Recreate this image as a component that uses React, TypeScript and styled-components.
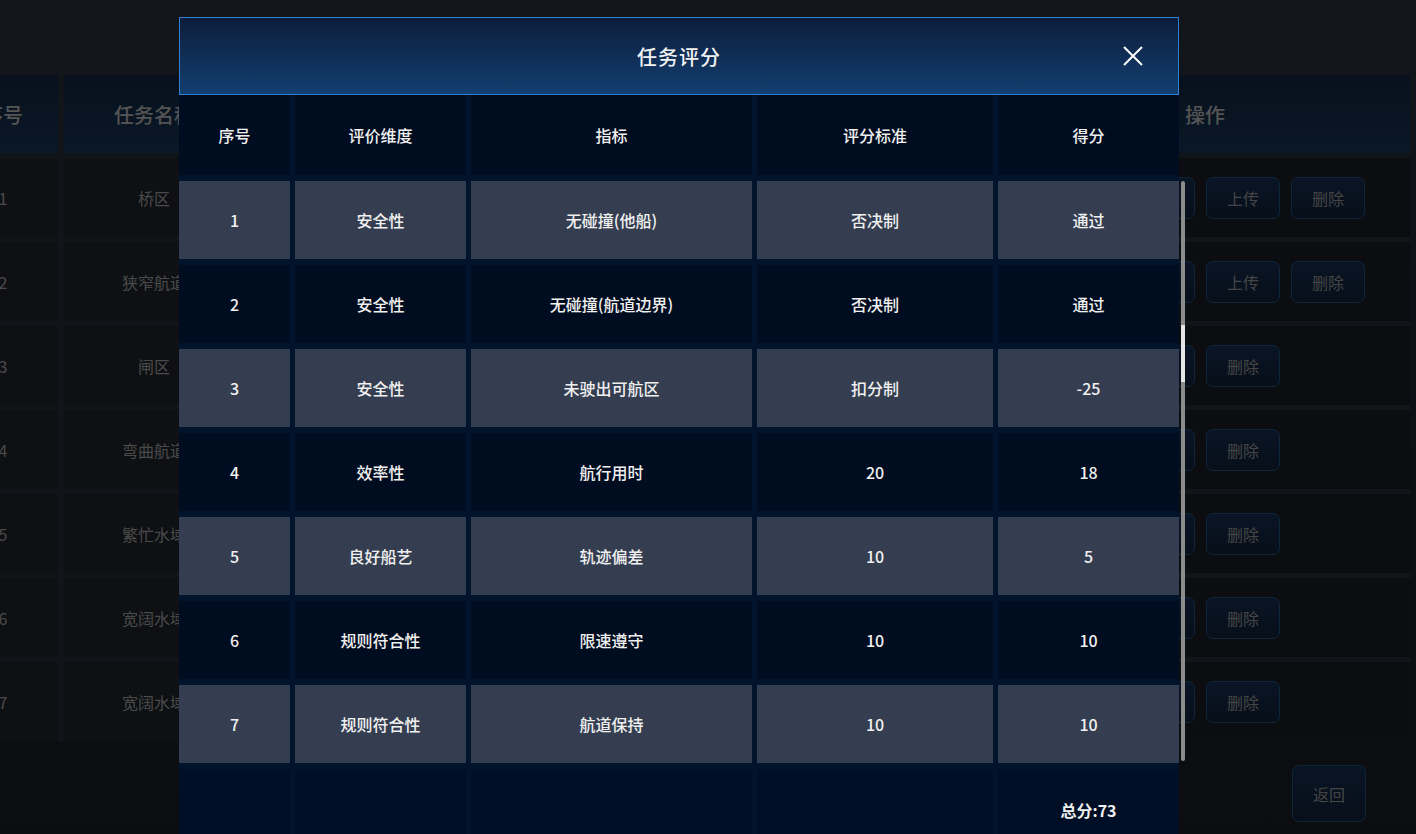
import { FC } from 'react'
import styled, { createGlobalStyle } from 'styled-components'

const GlobalStyle = createGlobalStyle`
  html, body {
    margin: 0;
    padding: 0;
    width: 1416px;
    height: 834px;
    overflow: hidden;
    background: #0f1318;
    font-family: 'Noto Sans CJK SC', 'Noto Sans', sans-serif;
  }
`

interface ScoreRow {
  no: number
  dimension: string
  indicator: string
  standard: string
  score: string
}

const scoreRows: ScoreRow[] = [
  { no: 1, dimension: '安全性', indicator: '无碰撞(他船)', standard: '否决制', score: '通过' },
  { no: 2, dimension: '安全性', indicator: '无碰撞(航道边界)', standard: '否决制', score: '通过' },
  { no: 3, dimension: '安全性', indicator: '未驶出可航区', standard: '扣分制', score: '-25' },
  { no: 4, dimension: '效率性', indicator: '航行用时', standard: '20', score: '18' },
  { no: 5, dimension: '良好船艺', indicator: '轨迹偏差', standard: '10', score: '5' },
  { no: 6, dimension: '规则符合性', indicator: '限速遵守', standard: '10', score: '10' },
  { no: 7, dimension: '规则符合性', indicator: '航道保持', standard: '10', score: '10' },
]

// 背景的任务列表
const tasks = [
  { no: 1, name: '桥区', ops: ['查看', '评分', '上传', '删除'] },
  { no: 2, name: '狭窄航道', ops: ['查看', '评分', '上传', '删除'] },
  { no: 3, name: '闸区', ops: ['查看', '评分', '删除'] },
  { no: 4, name: '弯曲航道', ops: ['查看', '评分', '删除'] },
  { no: 5, name: '繁忙水域', ops: ['查看', '评分', '删除'] },
  { no: 6, name: '宽阔水域', ops: ['查看', '评分', '删除'] },
  { no: 7, name: '宽阔水域', ops: ['查看', '评分', '删除'] },
]

const Background: FC = () => (
  <BgPage>
    <BgTable>
      <BgHead>序号</BgHead>
      <BgHead>任务名称</BgHead>
      <BgHead />
      <BgHead />
      <BgHead />
      <BgHead>操作</BgHead>
      {tasks.map((t) => (
        <BgRow key={t.no}>
          <BgCell>{t.no}</BgCell>
          <BgCell>{t.name}</BgCell>
          <BgCell />
          <BgCell />
          <BgCell />
          <BgOps>
            {t.ops.map((op) => (
              <BgButton key={op}>{op}</BgButton>
            ))}
          </BgOps>
        </BgRow>
      ))}
    </BgTable>
    <BgFooter>
      <BgBackButton>返回</BgBackButton>
    </BgFooter>
  </BgPage>
)

const ScoreModal: FC = () => {
  const total = 73
  return (
    <Modal>
      <ModalHeader>
        <ModalTitle>任务评分</ModalTitle>
        <CloseButton aria-label="close">
          <svg width="22" height="22" viewBox="0 0 22 22" fill="none">
            <path d="M2 2L20 20M20 2L2 20" stroke="#ffffff" strokeWidth="2" />
          </svg>
        </CloseButton>
      </ModalHeader>
      <Body>
        <Grid>
          <HeadCell>序号</HeadCell>
          <HeadCell>评价维度</HeadCell>
          <HeadCell>指标</HeadCell>
          <HeadCell>评分标准</HeadCell>
          <HeadCell>得分</HeadCell>
          {scoreRows.map((r, i) => {
            const striped = i % 2 === 0
            return (
              <Row key={r.no}>
                <Cell striped={striped}>{r.no}</Cell>
                <Cell striped={striped}>{r.dimension}</Cell>
                <Cell striped={striped}>{r.indicator}</Cell>
                <Cell striped={striped}>{r.standard}</Cell>
                <Cell striped={striped}>{r.score}</Cell>
              </Row>
            )
          })}
          <FootCell />
          <FootCell />
          <FootCell />
          <FootCell />
          <FootCell>
            <Total>总分:{total}</Total>
          </FootCell>
        </Grid>
        <ScrollTrack>
          <ScrollThumb />
        </ScrollTrack>
      </Body>
    </Modal>
  )
}

export default function App() {
  return (
    <>
      <GlobalStyle />
      <Stage>
        <Background />
        <Mask>
          <ScoreModal />
        </Mask>
      </Stage>
    </>
  )
}

const Stage = styled.div`
  position: relative;
  width: 1416px;
  height: 834px;
  overflow: hidden;
`

/* ---------- background page ---------- */

const BgPage = styled.div`
  width: 1416px;
  height: 834px;
  padding-top: 75px;
  box-sizing: border-box;
  background: linear-gradient(180deg, #262e38 0%, #1c2129 40%, #171b21 100%);
`

const BgTable = styled.div`
  display: grid;
  grid-template-columns: 110px 180px 1fr 1fr 1fr 410px;
  column-gap: 6px;
  row-gap: 5px;
  width: 1462px;
  margin-left: -52px;
  background: #222a35;
`

const BgHead = styled.div`
  height: 78px;
  display: flex;
  align-items: center;
  justify-content: center;
  background: linear-gradient(180deg, #10223a 0%, #15304f 100%);
  color: #a8a8a8;
  font-size: 20px;
  font-weight: 500;
`

const BgRow = styled.div`
  display: contents;
`

const BgCell = styled.div`
  height: 79px;
  display: flex;
  align-items: center;
  justify-content: center;
  background: #1c2026;
  color: #959595;
  font-size: 16px;
`

const BgOps = styled.div`
  height: 79px;
  display: flex;
  align-items: center;
  gap: 11px;
  padding-left: 36px;
  background: #181b20;
`

const BgButton = styled.div`
  width: 74px;
  height: 42px;
  box-sizing: border-box;
  display: flex;
  align-items: center;
  justify-content: center;
  border: 1px solid #1f4a74;
  border-radius: 7px;
  background: linear-gradient(180deg, #13294a 0%, #0f1e33 100%);
  color: #8a8a8a;
  font-size: 16px;
`

const BgFooter = styled.div`
  display: flex;
  justify-content: flex-end;
  padding: 24px 50px 0 0;
`

const BgBackButton = styled(BgButton)`
  height: 57px;
`

/* ---------- modal ---------- */

const Mask = styled.div`
  position: absolute;
  inset: 0;
  background: rgba(0, 0, 0, 0.5);
  display: flex;
  justify-content: center;
  align-items: flex-start;
  padding-top: 17px;
`

const Modal = styled.div`
  flex-shrink: 0;
  width: 1000px;
  margin-left: -58px;
  background: #000c1f;
  display: flex;
  flex-direction: column;
`

const ModalHeader = styled.div`
  position: relative;
  flex-shrink: 0;
  height: 78px;
  box-sizing: border-box;
  border: 1px solid #2f80d2;
  background: linear-gradient(180deg, #0d1d3b 0%, #133f70 100%);
  display: flex;
  align-items: center;
  justify-content: center;
`

const ModalTitle = styled.div`
  color: #f2f2f2;
  font-size: 20px;
  font-weight: 500;
  letter-spacing: 1px;
`

const CloseButton = styled.div`
  position: absolute;
  right: 34px;
  top: 27px;
  width: 22px;
  height: 22px;
  display: flex;
`

const Body = styled.div`
  position: relative;
  flex-shrink: 0;
`

const Grid = styled.div`
  display: grid;
  grid-template-columns: 111px 171px 281px 236px 181px;
  column-gap: 5px;
  row-gap: 6px;
  background: #02142c;
`

const HeadCell = styled.div`
  height: 80px;
  display: flex;
  align-items: center;
  justify-content: center;
  background: #000c1f;
  color: #f0f0f0;
  font-size: 16px;
  font-weight: 500;
`

const Row = styled.div`
  display: contents;
`

const Cell = styled.div<{ striped: boolean }>`
  height: 78px;
  display: flex;
  align-items: center;
  justify-content: center;
  background: ${(props) => (props.striped ? '#343e50' : '#000c1f')};
  color: #f0f0f0;
  font-size: 16px;
  font-weight: 500;
`

const FootCell = styled.div`
  height: 78px;
  display: flex;
  align-items: center;
  justify-content: center;
  background: #000f26;
`

const Total = styled.span`
  padding-top: 4px;
  color: #f0f0f0;
  font-size: 16px;
  font-weight: 600;
`

const ScrollTrack = styled.div`
  position: absolute;
  right: -6px;
  top: 86px;
  width: 4px;
  height: 580px;
  background: #8c8c8c;
  border-radius: 2px;
`

const ScrollThumb = styled.div`
  margin-top: 144px;
  width: 4px;
  height: 57px;
  background: #e6e6e6;
`
